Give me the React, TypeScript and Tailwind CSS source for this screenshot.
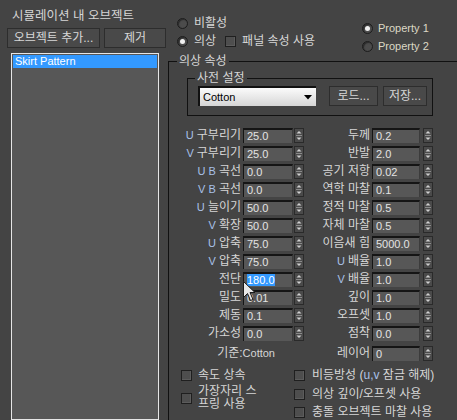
import React from "react";

type Row = { pre?: string; label: string; value: string; selected?: boolean };

const LEFT_ROWS: Row[] = [
  { pre: "U", label: "구부리기", value: "25.0" },
  { pre: "V", label: "구부리기", value: "25.0" },
  { pre: "U B", label: "곡선", value: "0.0" },
  { pre: "V B", label: "곡선", value: "0.0" },
  { pre: "U", label: "늘이기", value: "50.0" },
  { pre: "V", label: "확장", value: "50.0" },
  { pre: "U", label: "압축", value: "75.0" },
  { pre: "V", label: "압축", value: "75.0" },
  { label: "전단", value: "180.0", selected: true },
  { label: "밀도", value: "0.01" },
  { label: "제동", value: "0.1" },
  { label: "가소성", value: "0.0" },
];

const RIGHT_ROWS: Row[] = [
  { label: "두께", value: "0.2" },
  { label: "반발", value: "2.0" },
  { label: "공기 저항", value: "0.02" },
  { label: "역학 마찰", value: "0.1" },
  { label: "정적 마찰", value: "0.5" },
  { label: "자체 마찰", value: "0.5" },
  { label: "이음새 힘", value: "5000.0" },
  { pre: "U", label: "배율", value: "1.0" },
  { pre: "V", label: "배율", value: "1.0" },
  { label: "깊이", value: "1.0" },
  { label: "오프셋", value: "1.0" },
  { label: "점착", value: "0.0" },
];

function Radio({ checked }: { checked?: boolean }) {
  return (
    <span className="w-[11px] h-[11px] shrink-0 rounded-full border border-[#1c1c1c] bg-[#4c4c4c] shadow-[inset_1px_1px_1px_#2a2a2a] flex items-center justify-center">
      {checked && <span className="w-[5px] h-[5px] rounded-full bg-[#f0f0f0]" />}
    </span>
  );
}

function Check() {
  return (
    <span className="block w-[11px] h-[11px] shrink-0 border border-[#1f1f1f] bg-[#4e4e4e] shadow-[inset_-1px_-1px_0_#5c5c5c]" />
  );
}

function Spinner() {
  return (
    <svg width="10" height="15" viewBox="0 0 10 15" className="shrink-0 block">
      <rect x="0.5" y="0.5" width="9" height="14" fill="#4a4a4a" stroke="#2a2a2a" />
      <path d="M5 3 L7.5 5.5 L2.5 5.5 Z" fill="#cfcfcf" />
      <line x1="2" y1="7.5" x2="8" y2="7.5" stroke="#8a8a8a" />
      <path d="M2.5 9.5 L7.5 9.5 L5 12 Z" fill="#cfcfcf" />
    </svg>
  );
}

function Field({ value, selected, w }: { value: string; selected?: boolean; w: string }) {
  return (
    <div
      className={`${w} h-[15px] shrink-0 bg-[#575757] border-l border-t-2 border-[#151515] border-r border-r-[#3c3c3c] pl-[3px] text-[11px] leading-[13px] text-[#e4e4e4] font-['Liberation_Sans',sans-serif]`}
    >
      {selected ? <span className="bg-[#3399ff] text-white">{value}</span> : value}
    </div>
  );
}

function Label({ row, w }: { row: Row; w: string }) {
  return (
    <div className={`${w} shrink-0 text-right whitespace-nowrap leading-[14px]`}>
      {row.pre && <span className="text-[#a9c1e8] text-[11px]">{row.pre} </span>}
      {row.label}
    </div>
  );
}

function Button({ children, w }: { children: React.ReactNode; w: string }) {
  return (
    <div
      className={`${w} h-[20px] shrink-0 bg-[#494949] border border-[#2d2d2d] flex items-center justify-center text-[#d8d8d8] leading-none`}
    >
      {children}
    </div>
  );
}

export default function App() {
  return (
    <div className="relative w-[457px] h-[420px] overflow-hidden bg-[#444444] text-[#d6d6d6] text-[12px] font-['Liberation_Sans','Noto_Sans_CJK_KR',sans-serif] flex">
      {/* left: object list */}
      <div className="w-[168px] shrink-0 flex flex-col pt-[9px]">
        <div className="pl-[12px] leading-[14px] text-[12.5px]">시뮬레이션 내 오브젝트</div>
        <div className="flex gap-[4px] pl-[7px] mt-[5px]">
          <Button w="w-[93px]">오브젝트 추가...</Button>
          <Button w="w-[62px]">제거</Button>
        </div>
        <div className="ml-[11px] mt-[5px] w-[148px] flex-1 border border-[#e6e6e6] bg-[#575757] p-[1px]">
          <div className="h-[13px] bg-[#3399ff] text-white text-[11px] leading-[13px] pl-[2px]">
            Skirt Pattern
          </div>
        </div>
      </div>

      {/* right: cloth properties */}
      <div className="flex-1 flex flex-col">
        <div className="h-[54px] flex shrink-0">
          <div className="w-[194px] pl-[9px] pt-[14px]">
            <div className="h-[18px] flex items-center gap-[6px]">
              <Radio />
              <span className="leading-none">비활성</span>
            </div>
            <div className="h-[18px] flex items-center gap-[6px]">
              <Radio checked />
              <span className="leading-none">의상</span>
              <span className="ml-[3px]">
                <Check />
              </span>
              <span className="leading-none">패널 속성 사용</span>
            </div>
          </div>
          <div className="pt-[19px] text-[11px] text-[#dcd8c4]">
            <div className="h-[18px] flex items-center gap-[5px]">
              <Radio checked />
              <span className="leading-none">Property 1</span>
            </div>
            <div className="h-[18px] flex items-center gap-[5px]">
              <Radio />
              <span className="leading-none">Property 2</span>
            </div>
          </div>
        </div>

        <fieldset className="w-[300px] shrink-0 border border-[#111111] pb-[20px]">
          <legend className="ml-[8px] px-[2px] leading-[14px]">의상 속성</legend>

          <fieldset className="ml-[18px] mt-[3px] w-[246px] border border-[#111111] pb-[9px]">
            <legend className="ml-[7px] px-[2px] leading-[14px]">사전 설정</legend>
            <div className="flex items-center pl-[10px] mt-[1px]">
              <div className="w-[118px] h-[20px] shrink-0 border-l-2 border-t-2 border-[#111111] bg-gradient-to-b from-[#fbfbfb] to-[#d6d6d6] flex items-center pl-[3px] pr-[4px] text-black text-[11px]">
                <span className="flex-1">Cotton</span>
                <svg width="8" height="5" viewBox="0 0 8 5">
                  <path d="M0 0 L8 0 L4 4.5 Z" fill="#000" />
                </svg>
              </div>
              <div className="ml-[13px]">
                <Button w="w-[49px]">로드...</Button>
              </div>
              <div className="ml-[5px]">
                <Button w="w-[44px]">저장...</Button>
              </div>
            </div>
          </fieldset>

          <div className="flex mt-[10px]">
            <div className="w-[135px] shrink-0">
              {LEFT_ROWS.map((r, i) => (
                <div key={i} className="h-[18px] flex items-center">
                  <Label row={r} w="w-[72px]" />
                  <div className="ml-[2px]">
                    <Field value={r.value} selected={r.selected} w="w-[50px]" />
                  </div>
                  <div className="ml-[1px]">
                    <Spinner />
                  </div>
                </div>
              ))}
              <div className="h-[18px] mt-[2px] flex items-center">
                <div className="w-[106px] text-right leading-[14px]">
                  기준:<span className="text-[11px]">Cotton</span>
                </div>
              </div>
            </div>
            <div className="shrink-0">
              {RIGHT_ROWS.map((r, i) => (
                <div key={i} className="h-[18px] flex items-center">
                  <Label row={r} w="w-[66px]" />
                  <div className="ml-[2px]">
                    <Field value={r.value} w="w-[48px]" />
                  </div>
                  <div className="ml-[3px]">
                    <Spinner />
                  </div>
                </div>
              ))}
              <div className="h-[18px] mt-[2px] flex items-center">
                <Label row={{ label: "레이어", value: "0" }} w="w-[66px]" />
                <div className="ml-[2px]">
                  <Field value="0" w="w-[48px]" />
                </div>
                <div className="ml-[3px]">
                  <Spinner />
                </div>
              </div>
            </div>
          </div>

          <div className="flex mt-[4px]">
            <div className="ml-[12px] w-[113px] shrink-0">
              <div className="h-[18px] flex items-center gap-[6px]">
                <Check />
                <span className="leading-none">속도 상속</span>
              </div>
              <div className="mt-[1px] flex items-center gap-[6px]">
                <Check />
                <span className="leading-[13px]">
                  가장자리 스
                  <br />
                  프링 사용
                </span>
              </div>
            </div>
            <div className="shrink-0">
              <div className="h-[18px] flex items-center gap-[7px]">
                <Check />
                <span className="leading-none whitespace-nowrap">
                  비등방성 (<span className="text-[#a9c1e8]">u,v</span> 잠금 해제)
                </span>
              </div>
              <div className="h-[18px] mt-[1px] flex items-center gap-[7px]">
                <Check />
                <span className="leading-none whitespace-nowrap">의상 깊이/오프셋 사용</span>
              </div>
              <div className="h-[18px] flex items-center gap-[7px]">
                <Check />
                <span className="leading-none whitespace-nowrap">충돌 오브젝트 마찰 사용</span>
              </div>
            </div>
          </div>
        </fieldset>
      </div>

      {/* mouse pointer over the 전단 field */}
      <svg
        width="13"
        height="21"
        viewBox="0 0 13 21"
        className="absolute left-[243px] top-[281px]"
      >
        <path
          d="M0.5 0.5 L0.5 16.5 L4.5 12.5 L7.5 19.5 L10 18.5 L7 11.5 L12 11.5 Z"
          fill="#e8e8e8"
          stroke="#1a1a1a"
          strokeWidth="1"
        />
      </svg>
    </div>
  );
}
